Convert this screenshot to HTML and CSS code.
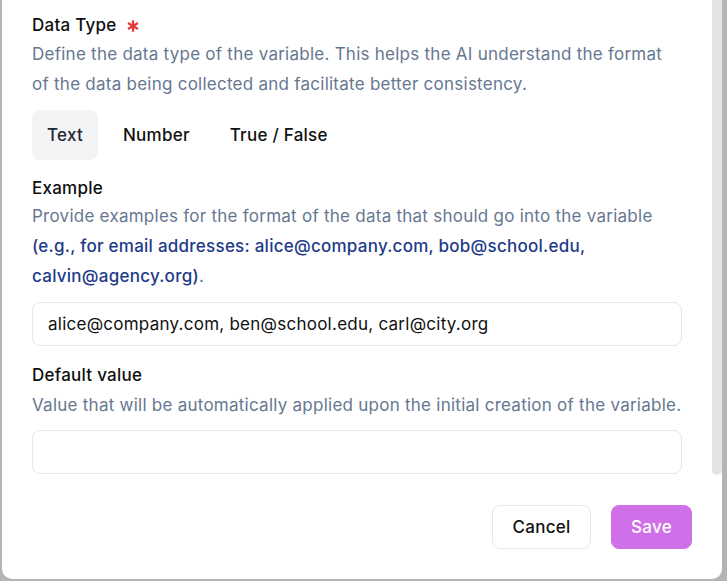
FILE: index.html
```html
<!DOCTYPE html>
<html>
<head>
<meta charset="utf-8">
<link rel="stylesheet" href="styles.css">
</head>
<body>
<div class="modal">
  <div class="scroll">
    <div class="content">
      <div class="field">
        <div class="label">Data Type <svg class="req" width="12" height="12" viewBox="0 0 12 12"><g stroke="#e5383b" stroke-width="2.3" stroke-linecap="butt"><line x1="6" y1="0.3" x2="6" y2="11.7"/><line x1="1" y1="3.1" x2="11" y2="8.9"/><line x1="1" y1="8.9" x2="11" y2="3.1"/></g></svg></div>
        <p class="desc">Define the data type of the variable. This helps the AI understand the format of the data being collected and facilitate better consistency.</p>
        <div class="tabs">
          <button class="tab active">Text</button>
          <button class="tab">Number</button>
          <button class="tab">True / False</button>
        </div>
      </div>
      <div class="field f-example">
        <div class="label">Example</div>
        <p class="desc">Provide examples for the format of the data that should go into the variable <span class="hint">(e.g., for email addresses: alice@company.com, bob@school.edu, calvin@agency.org)</span>.</p>
        <div class="input">alice@company.com, ben@school.edu, carl@city.org</div>
      </div>
      <div class="field f-default">
        <div class="label">Default value</div>
        <p class="desc">Value that will be automatically applied upon the initial creation of the variable.</p>
        <div class="input"></div>
      </div>
    </div>
    <div class="scrollbar"><div class="thumb"></div></div>
  </div>
  <div class="footer">
    <button class="btn cancel">Cancel</button>
    <button class="btn save">Save</button>
  </div>
</div>
</body>
</html>
```

FILE: styles.css
```css
* { box-sizing: border-box; }
html, body {
  margin: 0;
  padding: 0;
  height: 100%;
}
body {
  background: #b4b4b4;
  font-family: Inter, "Noto Sans", sans-serif;
  font-size: 17px;
  letter-spacing: 0.25px;
  color: #0f0f0f;
  overflow: hidden;
}
.modal {
  margin-left: 2px;
  width: 720px;
  height: 579px;
  background: #ffffff;
  border-radius: 0 0 10px 10px;
  display: flex;
  flex-direction: column;
}
.scroll {
  flex: 1;
  display: flex;
  min-height: 0;
}
.content {
  flex: 1;
  padding: 13px 30px 0 30px;
}
.scrollbar {
  width: 10px;
  display: flex;
}
.thumb {
  flex: 1;
  background: #e3e3e3;
  border-radius: 0 0 5px 5px;
}
.label {
  font-weight: 470;
  line-height: 24px;
  display: flex;
  align-items: center;
  gap: 10px;
}
.req { margin-top: 2px; }
.desc {
  margin: 2px 0 0 0;
  color: #667791;
  line-height: 30px;
}
.hint {
  color: #1e3a8a;
  font-weight: 470;
}
.tabs {
  display: flex;
  gap: 10px;
  margin-top: 11px;
}
.tab {
  font-family: inherit;
  font-size: 17px;
  letter-spacing: 0.25px;
  font-weight: 470;
  color: #111111;
  background: transparent;
  border: none;
  border-radius: 8px;
  height: 50px;
  padding: 0 15px;
}
.tab.active {
  background: #f3f4f6;
  color: #1f2937;
}
.f-example { margin-top: 16px; }
.f-example .desc { margin-top: 1px; }
.f-default { margin-top: 17px; }
.f-default .desc { margin-top: 3px; }
.input {
  margin-top: 11px;
  height: 44px;
  border: 1px solid #e5e7eb;
  border-radius: 8px;
  padding: 0 15px;
  display: flex;
  align-items: center;
  color: #111111;
}
.f-default .input { margin-top: 10px; }
.footer {
  display: flex;
  justify-content: flex-end;
  gap: 20px;
  padding: 30px 30px 30px 30px;
}
.btn {
  font-family: inherit;
  font-size: 17px;
  letter-spacing: 0.25px;
  font-weight: 470;
  height: 44px;
  border-radius: 8px;
  padding: 0;
  display: flex;
  align-items: center;
  justify-content: center;
}
.cancel {
  width: 99px;
  background: #ffffff;
  border: 1px solid #e5e7eb;
  color: #111111;
}
.save {
  width: 81px;
  background: #d070e8;
  border: 1px solid #d070e8;
  color: #ffffff;
}
```
